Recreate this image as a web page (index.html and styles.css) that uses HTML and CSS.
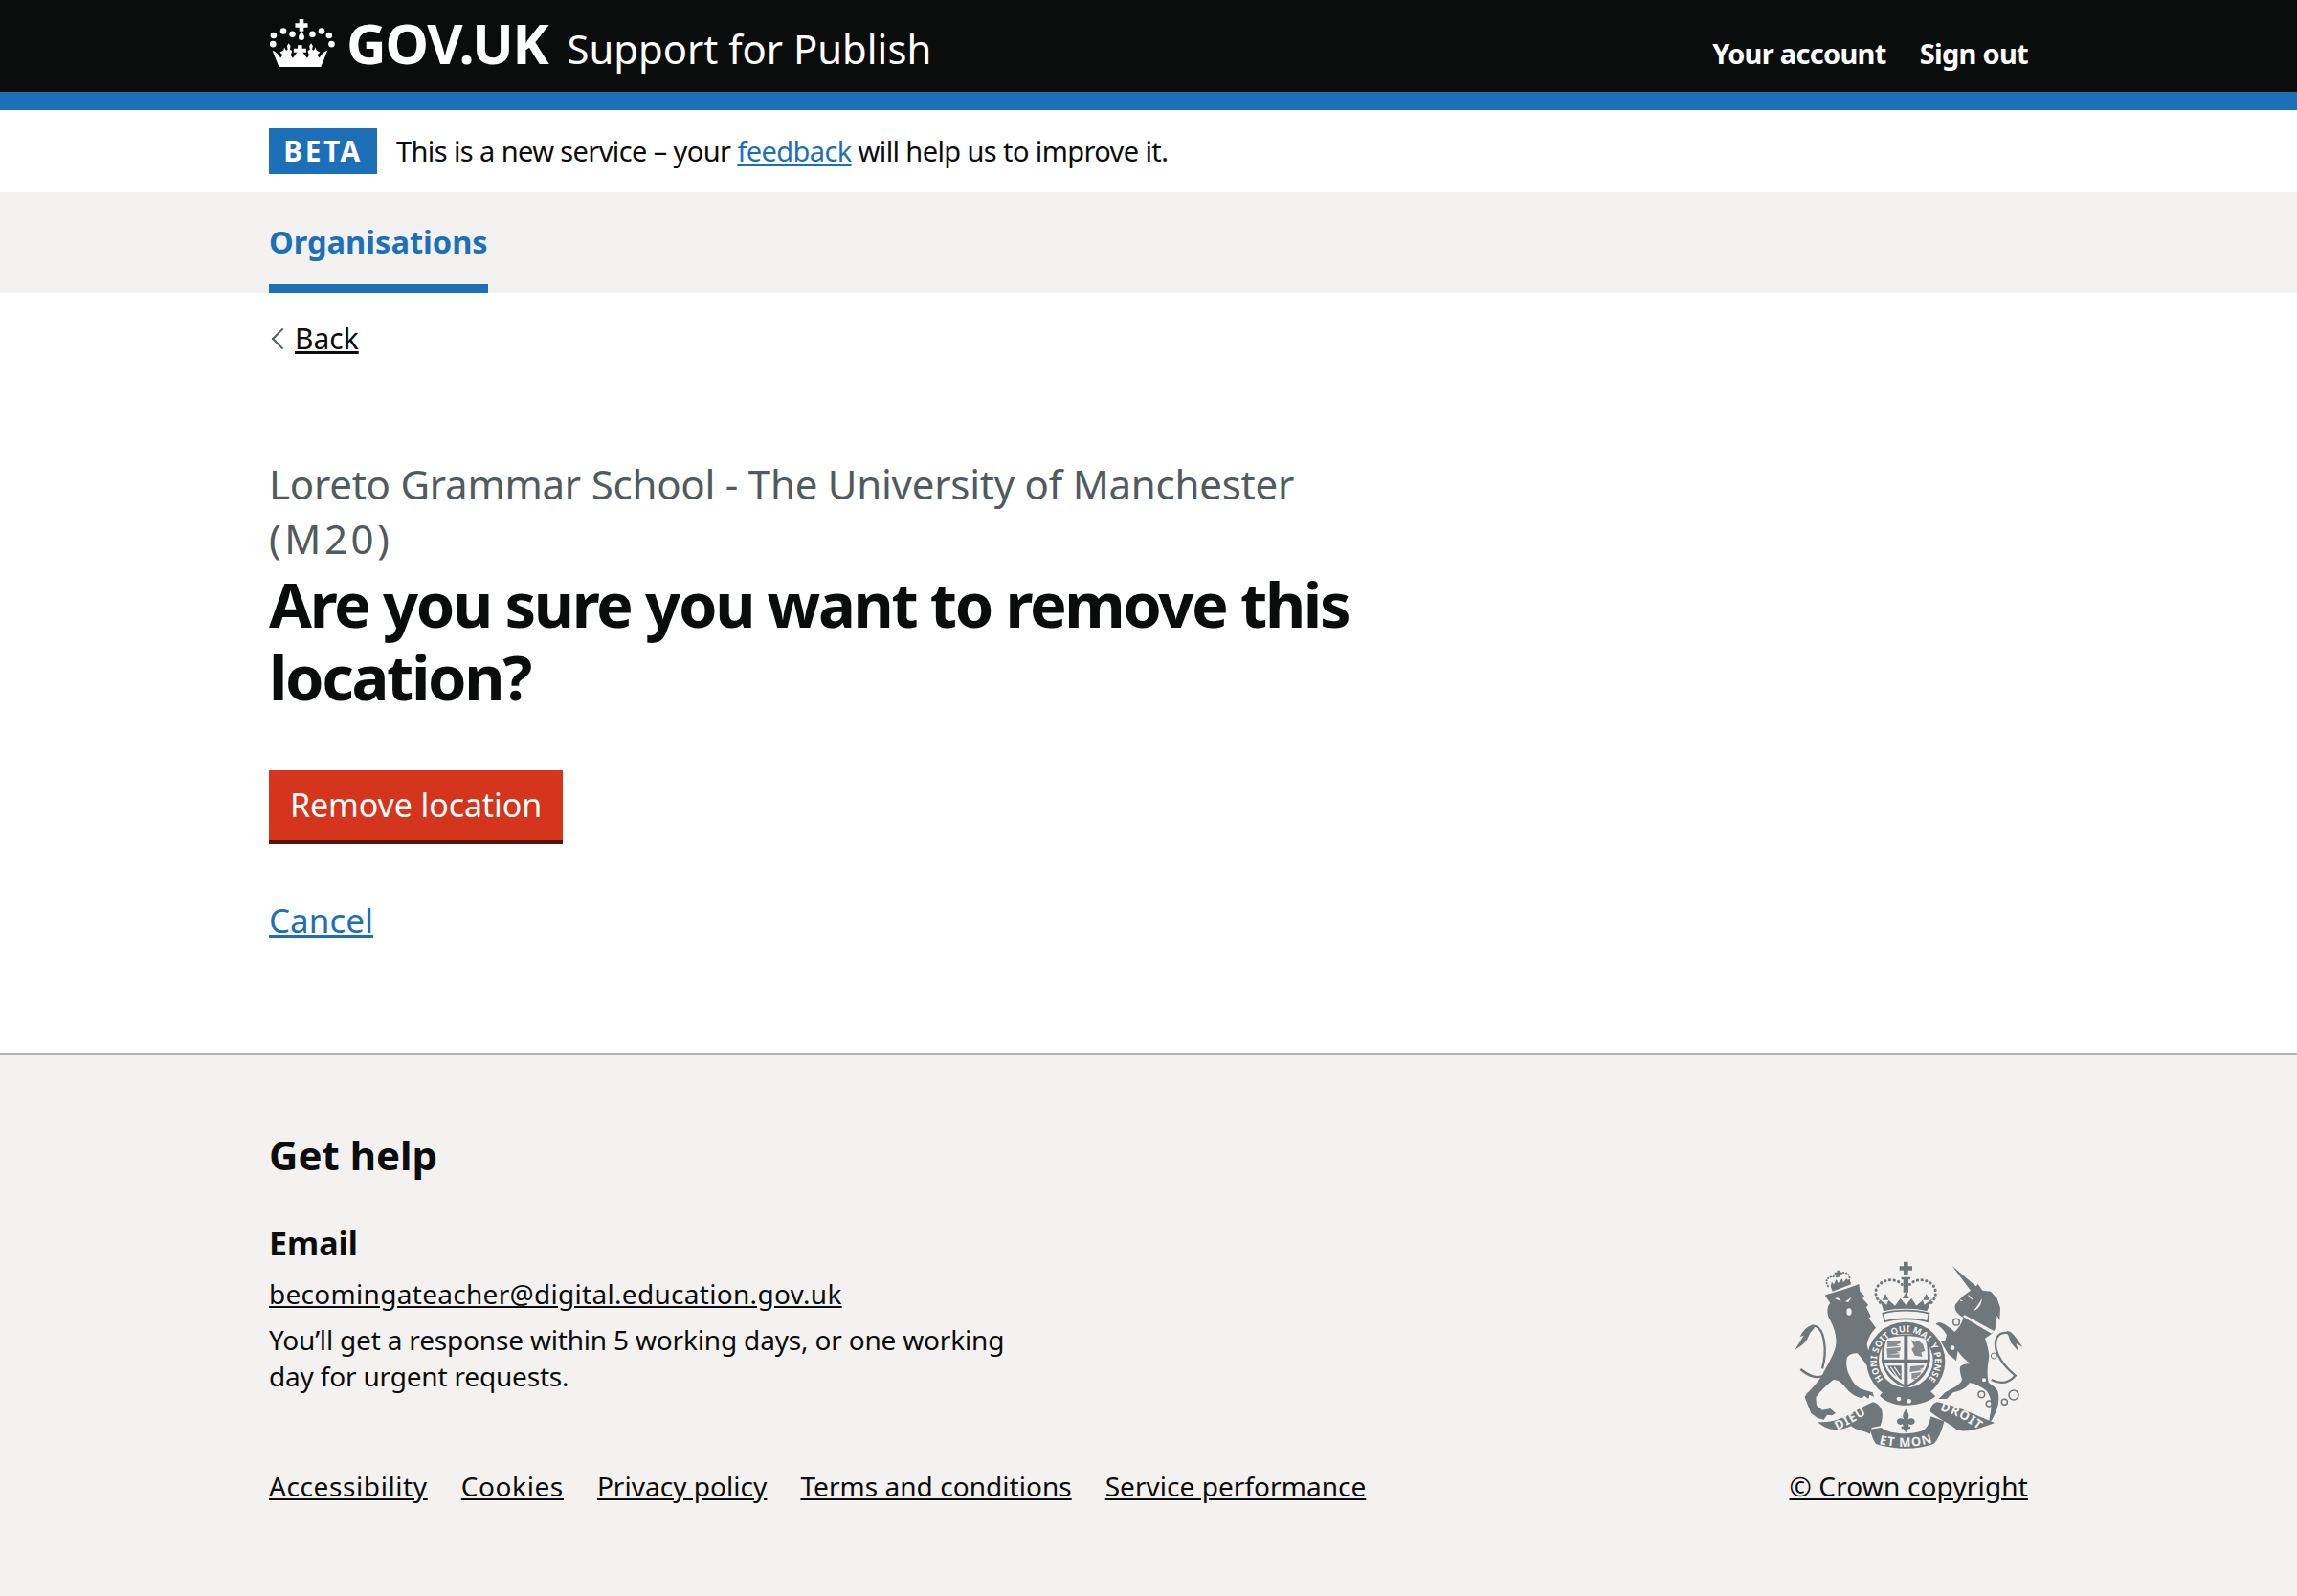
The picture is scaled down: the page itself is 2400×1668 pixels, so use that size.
FILE: index.html
```html
<!DOCTYPE html>
<html lang="en">
<head>
<meta charset="utf-8">
<title>Remove location - Support for Publish</title>
<link rel="stylesheet" href="styles.css">
</head>
<body>
<header class="site-header">
  <div class="container header-row">
    <div class="brand">
      <a class="logo" href="#">
        <svg class="crown" viewBox="30 24 212 165" aria-hidden="true">
          <g fill="#fff">
            <path d="M126 30h14v13h13v14h-13v12h-14V57h-13V43h13z"/>
            <path d="M133 68c7 10 9 15 9 20a9 9 0 0 1-18 0c0-5 3-10 9-20z"/>
            <circle cx="44" cy="82" r="10"/><circle cx="75" cy="68" r="10"/><circle cx="104" cy="78" r="10"/>
            <circle cx="168" cy="78" r="10"/><circle cx="197" cy="68" r="10"/><circle cx="221" cy="82" r="10"/>
            <circle cx="42" cy="110" r="10"/><circle cx="229" cy="110" r="10"/>
            <path d="M40 130c12 4 20 12 26 24l7-9-9-9 12-7 2-9 6 10 5-2-2-12 5-9 6 9-2 12 7 3-4 15 6 9 14-19h-11v-12h13v-11h14v11h13v12h-11l14 19 6-9-4-15 7-3-2-12 6-9 5 9-2 12 5 2 6-10 2 9 12 7-9 9 7 9c6-12 14-20 26-24l-21 53H61z"/>
          </g>
        </svg>
        <span class="logo-text">GOV.UK</span>
      </a>
      <a class="service-name" href="#">Support for Publish</a>
    </div>
    <nav class="account-nav">
      <a href="#">Your account</a>
      <a href="#">Sign out</a>
    </nav>
  </div>
</header>

<div class="container phase">
  <strong class="tag">BETA</strong>
  <span class="phase-text">This is a new service – your <a class="link" href="#">feedback</a> will help us to improve it.</span>
</div>

<nav class="sub-nav">
  <div class="container">
    <a class="sub-nav-item" href="#">Organisations</a>
  </div>
</nav>

<main class="container main">
  <a class="back" href="#"><span class="chevron"></span><span class="back-text">Back</span></a>
  <span class="caption">Loreto Grammar School - The University of Manchester <span class="code">(M20)</span></span>
  <h1 class="title">Are you sure you want to remove this location?</h1>
  <a class="button" href="#">Remove location</a>
  <p class="cancel"><a class="link" href="#">Cancel</a></p>
</main>

<footer class="footer">
  <div class="container footer-row">
    <div class="footer-left">
      <h2 class="help-title">Get help</h2>
      <h3 class="help-sub">Email</h3>
      <p class="help-mail"><a href="#">becomingateacher@digital.education.gov.uk</a></p>
      <p class="help-text">You’ll get a response within 5 working days, or one working day for urgent requests.</p>
      <ul class="footer-links">
        <li class="wide-item"><a href="#">Accessibility</a></li>
        <li class="wide-item"><a href="#">Cookies</a></li>
        <li><a href="#">Privacy policy</a></li>
        <li><a href="#">Terms and conditions</a></li>
        <li><a href="#">Service performance</a></li>
      </ul>
    </div>
    <div class="footer-right">
      <svg class="crest" viewBox="100 55 720 609" aria-hidden="true">
        <defs>
          <path id="garter" d="M400 446A91 91 0 1 1 504 446"/>
          <path id="ribL" d="M226 592C265 577 305 552 340 530"/>
          <path id="ribC" d="M366 630C420 644 480 644 540 626"/>
          <path id="ribR" d="M556 526C600 535 645 560 684 590"/>
        </defs>
        <g fill="#6f777b">
          <!-- lion -->
          <g transform="translate(90 45)">
            <path d="M108 120C130 112 180 100 215 85L218 108L232 122L226 130L244 150L238 158L252 186L246 192L268 222C255 235 245 250 240 275L246 300L258 322L274 345L262 335L262 352L250 340L245 350C238 335 225 320 210 302C195 302 185 305 178 315C172 335 178 360 190 380C200 400 215 415 235 418L258 425L262 438L248 432L245 445L232 435L225 442C205 440 185 425 170 405C160 395 150 385 135 385C115 400 95 420 80 440L82 465L100 480L125 475L142 490L130 497L115 495L105 510L85 505L65 490L55 465L45 440L50 430C65 415 85 395 100 370C115 340 135 310 142 280C148 250 135 215 120 190C112 170 118 150 125 145Z"/>
            <path d="M138 130L160 140L150 128ZM172 140L192 126L182 142Z" fill="#f3f2f1"/>
            <ellipse cx="184" cy="172" rx="8" ry="11" fill="#f3f2f1"/>
            <path d="M108 370C85 385 55 372 32 352M100 350C116 295 108 218 72 216" fill="none" stroke="#6f777b" stroke-width="7"/>
            <path d="M72 212C50 218 38 235 30 250L42 246L14 292C28 282 42 275 52 260L62 238L76 222Z"/>
            <!-- lion's crown -->
            <path d="M126 92L186 72L190 86L132 108Z"/>
            <path d="M146 42h8v6h8v7h-8v8h-8v-8h-8v-7h8z"/>
            <g fill="none" stroke="#6f777b" stroke-width="6" stroke-linecap="round" stroke-dasharray="1 8">
              <path d="M118 92C106 72 118 58 146 62M184 74C190 55 176 44 152 52"/>
            </g>
            <path d="M126 92l4-14 6 8 8-16 6 12 12-14 4 12 10-12 14 14z"/>
          </g>
          <!-- unicorn -->
          <g transform="translate(450 45)">
            <path d="M147 28L222 92L228 85L242 105L268 108L288 130L298 160L296 200L288 184L282 226L272 240L250 255C258 280 265 300 262 320C258 345 255 370 262 395C272 402 285 410 290 420C298 450 290 480 272 510L262 522L265 500C272 470 272 440 255 420C240 410 220 395 200 395C195 410 175 420 150 425L130 445L105 445L125 425C150 410 175 400 178 385C175 370 170 360 172 345C180 335 195 335 205 335C190 325 175 310 165 295L160 325L135 305L110 262L125 262L130 245C120 225 105 215 95 210L105 205C120 205 145 225 155 235C165 225 178 210 182 190C165 180 150 165 158 148L178 125L205 105Z"/>
            <path d="M180 186L186 182L278 232L270 240Z" fill="#f3f2f1"/>
            <g fill="#f3f2f1"><circle cx="198" cy="194" r="3"/><circle cx="214" cy="204" r="3"/><circle cx="230" cy="213" r="3"/><circle cx="246" cy="222" r="3"/></g>
            <path d="M172 134l10 3-8 3z" fill="#f3f2f1"/>
            <path d="M196 118c8 4 14 10 16 16-6-2-12-6-16-16zM240 130C240 150 228 165 212 170C225 158 232 145 240 130Z" fill="#f3f2f1"/>
            <circle cx="268" cy="352" r="7" fill="#f3f2f1"/><circle cx="247" cy="386" r="6" fill="#f3f2f1"/>
            <circle cx="278" cy="310" r="9" fill="#f3f2f1" stroke="#6f777b" stroke-width="3"/>
            <circle cx="148" cy="285" r="7" fill="#f3f2f1"/>
            <g fill="none" stroke="#6f777b" stroke-width="4.5">
              <circle cx="160" cy="204" r="10"/><circle cx="239" cy="431" r="10"/><circle cx="263" cy="460" r="9"/><circle cx="311" cy="455" r="9"/><circle cx="340" cy="433" r="15"/>
            </g>
            <path d="M270 385C295 398 322 398 345 372C312 345 276 302 284 262C290 235 322 230 338 250" fill="none" stroke="#6f777b" stroke-width="7"/>
            <path d="M318 232C335 232 345 250 368 282L348 272L355 296L332 270Z"/>
          </g>
          <!-- royal crown -->
          <path d="M445 60h14v14h13v13h-13v14h-14V87h-13V74h13z"/>
          <path d="M438 108h28v8h-6v40h-16v-40h-6z"/>
          <path d="M366 175C378 195 380 205 382 215C420 205 484 205 518 215C522 205 526 195 536 175L510 195L505 180L485 198L470 175L452 195L435 175L418 198L398 180L392 195Z"/>
          <path d="M380 222C420 210 482 210 524 222L520 248C490 236 415 236 386 248Z" fill="#f3f2f1" stroke="#6f777b" stroke-width="5"/>
          <path d="M452 155l10 20h-20zM388 160l10 20h-20zM516 160l10 20h-20z"/>
          <g fill="none" stroke="#6f777b" stroke-width="9" stroke-linecap="round" stroke-dasharray="1 13">
            <path d="M440 132C425 112 385 112 365 135C350 155 360 178 374 190"/>
            <path d="M464 132C480 112 520 112 538 135C552 155 544 178 530 190"/>
          </g>
          <!-- garter -->
          <circle cx="452" cy="372" r="123"/>
          <circle cx="452" cy="370" r="85" fill="#f3f2f1"/>
          <path d="M376 372C376 345 376 318 386 298C415 284 490 284 518 298C528 318 528 345 528 372C520 415 490 442 452 456C414 442 384 415 376 372Z"/>
          <path d="M384 366C384 345 384 322 391 303C405 296 430 293 446 293V366ZM458 293C474 293 498 296 513 303C520 322 520 345 520 366H458ZM458 378H519C511 410 484 432 458 445ZM385 378H446V445C420 432 393 410 385 378Z" fill="#f3f2f1"/>
          <g>
            <path d="M394 310l38-4 4 10-14 4 14 4-42 4zM392 332l44-4-2 12-12 2 12 4-40 6zM394 352l38-2v10h-38z" fill="#6f777b" opacity=".8"/>
            <path d="M468 304l12 8 10-6 16 14 6 20-12 4 4 14-24-4-10-20 8-8z" fill="#6f777b" opacity=".85"/>
            <path d="M466 388l44-4-4 10-12 3 12 3-42 6zM470 410l30-4-4 10-10 3 6 3-22 6zM472 428l14-2-4 6z" fill="#6f777b" opacity=".8"/>
            <path d="M394 386h44v44c-20-8-36-26-44-44z" fill="#6f777b"/>
            <path d="M404 390l26 38M416 390l18 26M400 402l22 24" stroke="#f3f2f1" stroke-width="3.5" fill="none"/>
          </g>
          <path d="M385 462C420 492 490 492 525 462L545 482C500 520 405 520 370 480Z"/>
          <circle cx="430" cy="490" r="7" fill="#f3f2f1"/><circle cx="462" cy="497" r="7" fill="#f3f2f1"/>
          <!-- scroll -->
          <path d="M175 562C250 570 295 520 350 500C380 510 385 540 372 575L345 580L340 600C320 590 300 590 280 575C250 590 210 595 175 562Z"/>
          <path d="M340 585C345 605 350 622 360 632C420 650 490 650 540 630C552 620 565 590 572 560L530 545C525 570 515 585 505 590C460 605 400 600 375 580Z"/>
          <path d="M528 530C530 515 535 505 550 500C610 510 670 540 730 565C690 580 640 600 610 585C590 570 560 555 528 530Z"/>
          <path d="M452 522c9 12 12 22 6 32 8-4 20-6 22 6 1 10-12 14-18 8l-2 8h6v8h-6l-8 12-8-12h-6v-8h6l-2-8c-6 6-19 2-18-8 2-12 14-10 22-6-6-10-3-20 6-32z"/>
        </g>
        <g class="crest-text">
          <text class="garter-text"><textPath href="#garter" startOffset="50%" text-anchor="middle">HONI SOIT QUI MAL Y PENSE</textPath></text>
          <text class="scroll-text"><textPath href="#ribL" startOffset="50%" text-anchor="middle">DIEU</textPath></text>
          <text class="scroll-text"><textPath href="#ribC" startOffset="50%" text-anchor="middle">ET MON</textPath></text>
          <text class="scroll-text"><textPath href="#ribR" startOffset="50%" text-anchor="middle">DROIT</textPath></text>
        </g>
      </svg>
      <a class="copyright" href="#">© Crown copyright</a>
    </div>
  </div>
</footer>
</body>
</html>
```

FILE: styles.css
```css
* { box-sizing: border-box; }
html, body { margin: 0; padding: 0; }
body {
  font-family: "Noto Sans", "Liberation Sans", sans-serif;
  color: #0b0c0c;
  background: #fff;
  font-size: 29px;
  min-height: 1668px;
  display: flex;
  flex-direction: column;
}
a { color: inherit; }
.container { width: 1838px; margin: 0 auto; }
.site-header {
  background: #0b0c0c;
  height: 115px;
  border-bottom: 19px solid #1d70b8;
  color: #fff;
}
.header-row {
  display: flex;
  justify-content: space-between;
  height: 96px;
}
.brand { display: flex; align-items: center; gap: 20px; padding-bottom: 6px; }
.logo { display: flex; align-items: center; gap: 11px; text-decoration: none; color: #fff; }
.crown { width: 70px; height: 54px; display: block; }
.logo-text { font-size: 57.5px; font-weight: 700; line-height: 64px; letter-spacing: -1.2px; }
.service-name { font-size: 41.8px; line-height: 60px; text-decoration: none; color: #fff; padding-top: 12px; }
.account-nav { display: flex; gap: 35px; align-items: center; padding-top: 15px; }
.account-nav a { font-size: 29px; font-weight: 700; letter-spacing: -0.7px; text-decoration: none; color: #fff; }
.phase { height: 86px; display: flex; align-items: center; gap: 20px; }
.tag {
  background: #1d70b8;
  color: #fff;
  font-size: 30px;
  line-height: 48px;
  height: 48px;
  width: 113px;
  text-align: center;
  letter-spacing: 2.4px;
  font-weight: 700;
}
.phase-text { font-size: 29px; letter-spacing: -0.6px; padding-bottom: 2px; }
.link { color: #1d70b8; }
.sub-nav { background: #f3f2f1; height: 105px; }
.sub-nav-item {
  display: inline-block;
  height: 105px;
  line-height: 104px;
  font-size: 32.6px;
  font-weight: 700;
  color: #1d70b8;
  text-decoration: none;
  border-bottom: 9px solid #1d70b8;
}
.main { flex: 0 0 auto; height: 795px; padding-top: 28px; }
.back { display: flex; align-items: center; gap: 5px; font-size: 30px; line-height: 40px; height: 40px; }
.chevron {
  width: 16px; height: 16px; margin-left: 6px;
  border-left: 2px solid #505a5f; border-bottom: 2px solid #505a5f;
  transform: rotate(45deg);
}
.caption {
  display: block;
  width: 1130px;
  margin-top: 103px;
  font-size: 42px;
  line-height: 57px;
  letter-spacing: -0.23px;
  color: #505a5f;
}
.code { letter-spacing: 3.6px; }
.title {
  width: 1200px;
  margin: 0;
  padding-top: 2px;
  font-size: 65px;
  line-height: 76px;
  letter-spacing: -2.35px;
  font-weight: 700;
}
.button {
  display: block;
  width: 307px;
  height: 77px;
  margin-top: 60px;
  background: #d4351c;
  border-bottom: 4px solid #55150b;
  color: #fff;
  font-size: 34px;
  line-height: 73px;
  letter-spacing: -0.1px;
  text-align: center;
  text-decoration: none;
}
.cancel { margin: 58px 0 0; font-size: 35px; line-height: 44px; }
.footer {
  flex: 1;
  background: #f3f2f1;
  border-top: 2px solid #b1b4b6;
}
.footer-row { display: flex; justify-content: space-between; padding-top: 76px; }
.help-title { margin: 0; font-size: 42px; line-height: 56px; font-weight: 700; }
.help-sub { margin: 40px 0 0; font-size: 34px; line-height: 48px; font-weight: 700; }
.help-mail { margin: 10px 0 0; font-size: 28px; line-height: 38px; letter-spacing: 0.3px; }
.help-text { margin: 10px 0 0; width: 800px; font-size: 28px; line-height: 38px; letter-spacing: -0.18px; }
.footer-links { list-style: none; margin: 77px 0 0; padding: 0; display: flex; gap: 35px; font-size: 28px; line-height: 38px; letter-spacing: 0.04px; }
.wide-item { letter-spacing: 0.6px; }
.footer-right { display: flex; flex-direction: column; align-items: flex-end; justify-content: flex-end; }
.crest { width: 240px; height: 203px; display: block; margin-right: 5px; }
.crest-text { fill: #f3f2f1; font-family: "Noto Sans", sans-serif; font-weight: 700; }
.garter-text { font-size: 28px; letter-spacing: 0.5px; }
.scroll-text { font-size: 39px; letter-spacing: 3px; }
.copyright { font-size: 28px; line-height: 38px; margin-top: 14px; letter-spacing: 0.15px; }
```
